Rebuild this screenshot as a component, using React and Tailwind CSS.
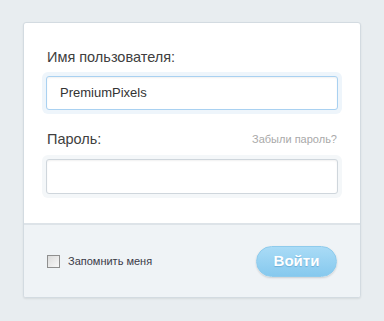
export default function App() {
  return (
    <div className="w-[384px] h-[321px] bg-[#e8edf0] pt-[22px] pl-[23px]" style={{ fontFamily: '"Liberation Sans", Arial, sans-serif' }}>
      <div className="w-[338px] h-[276px] bg-white border border-[#d3dbe1] rounded-[3px] shadow-[0_1px_2px_rgba(0,0,0,0.08)] flex flex-col overflow-hidden">
        <div className="px-[23px] pt-[25px] h-[200px] flex flex-col">
          <label className="text-[14.5px] leading-[18px] text-[#404040]">Имя пользователя:</label>
          <div className="mt-[6px] -mx-[5px] p-[4px] rounded-[6px] bg-[#eef5fb]">
            <div className="h-[34px] bg-white border border-[#a9d1f1] rounded-[3px] flex items-center px-[13px] shadow-[inset_0_1px_2px_rgba(0,0,0,0.06)]">
              <span className="text-[13px] text-[#333]">PremiumPixels</span>
            </div>
          </div>
          <div className="mt-[16px] flex items-end justify-between">
            <label className="text-[14.5px] leading-[18px] text-[#404040]">Пароль:</label>
            <span className="text-[11px] leading-[14px] text-[#a9a9a9] mb-[2px]">Забыли пароль?</span>
          </div>
          <div className="mt-[7px] -mx-[5px] p-[4px] rounded-[6px] bg-[#f4f7f9]">
            <div className="h-[35px] bg-white border border-[#cfd6dc] rounded-[3px] shadow-[inset_0_1px_2px_rgba(0,0,0,0.06)]"></div>
          </div>
        </div>
        <div className="flex-1 bg-[#eff3f6] border-t-2 border-[#dde3e8] px-[23px] flex items-center justify-between">
          <div className="flex items-center gap-[8px]">
            <div className="w-[13px] h-[13px] border border-[#8f8f8f] bg-gradient-to-br from-[#dcdcdc] to-[#f8f8f8]"></div>
            <span className="text-[11px] text-[#3a3a48]">Запомнить меня</span>
          </div>
          <button className="w-[81px] h-[31px] rounded-full bg-gradient-to-b from-[#a9dbf6] to-[#86c9ee] border border-[#8fcbec] text-white font-bold text-[15px] shadow-[0_1px_2px_rgba(0,0,0,0.15)]" style={{ textShadow: '0 1px 1px rgba(0,80,140,0.25)' }}>Войти</button>
        </div>
      </div>
    </div>
  );
}
